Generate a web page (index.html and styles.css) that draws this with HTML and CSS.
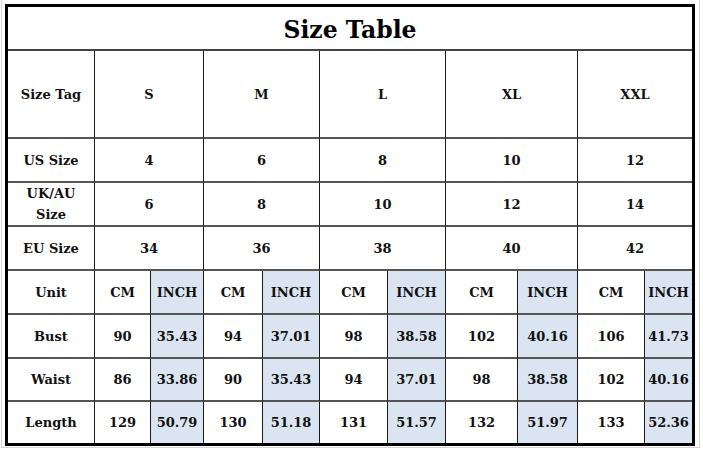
FILE: index.html
```html
<!DOCTYPE html>
<html>
<head>
<meta charset="utf-8">
<link rel="stylesheet" href="styles.css">
</head>
<body>
<div class="sheet">
  <div class="size-table">
    <div class="cell title span-all">Size Table</div>

    <div class="cell head tall">Size Tag</div>
    <div class="cell tall span2">S</div>
    <div class="cell tall span2">M</div>
    <div class="cell tall span2">L</div>
    <div class="cell tall span2">XL</div>
    <div class="cell tall span2 last">XXL</div>

    <div class="cell head">US Size</div>
    <div class="cell span2">4</div>
    <div class="cell span2">6</div>
    <div class="cell span2">8</div>
    <div class="cell span2">10</div>
    <div class="cell span2 last">12</div>

    <div class="cell head two-line">UK/AU<br>Size</div>
    <div class="cell span2">6</div>
    <div class="cell span2">8</div>
    <div class="cell span2">10</div>
    <div class="cell span2">12</div>
    <div class="cell span2 last">14</div>

    <div class="cell head">EU Size</div>
    <div class="cell span2">34</div>
    <div class="cell span2">36</div>
    <div class="cell span2">38</div>
    <div class="cell span2">40</div>
    <div class="cell span2 last">42</div>

    <div class="cell head">Unit</div>
    <div class="cell">CM</div><div class="cell inch">INCH</div>
    <div class="cell">CM</div><div class="cell inch">INCH</div>
    <div class="cell">CM</div><div class="cell inch">INCH</div>
    <div class="cell">CM</div><div class="cell inch">INCH</div>
    <div class="cell">CM</div><div class="cell inch last">INCH</div>

    <div class="cell head">Bust</div>
    <div class="cell">90</div><div class="cell inch">35.43</div>
    <div class="cell">94</div><div class="cell inch">37.01</div>
    <div class="cell">98</div><div class="cell inch">38.58</div>
    <div class="cell">102</div><div class="cell inch">40.16</div>
    <div class="cell">106</div><div class="cell inch last">41.73</div>

    <div class="cell head">Waist</div>
    <div class="cell">86</div><div class="cell inch">33.86</div>
    <div class="cell">90</div><div class="cell inch">35.43</div>
    <div class="cell">94</div><div class="cell inch">37.01</div>
    <div class="cell">98</div><div class="cell inch">38.58</div>
    <div class="cell">102</div><div class="cell inch last">40.16</div>

    <div class="cell head bottom">Length</div>
    <div class="cell bottom">129</div><div class="cell inch bottom">50.79</div>
    <div class="cell bottom">130</div><div class="cell inch bottom">51.18</div>
    <div class="cell bottom">131</div><div class="cell inch bottom">51.57</div>
    <div class="cell bottom">132</div><div class="cell inch bottom">51.97</div>
    <div class="cell bottom">133</div><div class="cell inch bottom last">52.36</div>
  </div>
</div>
</body>
</html>
```
FILE: styles.css
```css
* { box-sizing: border-box; }
html, body {
  margin: 0;
  padding: 0;
  background: #ffffff;
}
body {
  width: 703px;
  height: 450px;
  overflow: hidden;
  font-family: "DejaVu Serif", "Liberation Serif", serif;
}
.sheet {
  margin-left: 1px;
  width: 699px;
  height: 448px;
  padding: 4px 0 0 3px;
  border-left: 1px solid #d4d4d4;
  border-right: 1px solid #d4d4d4;
  border-bottom: 1px solid #d4d4d4;
}
.size-table {
  width: 690px;
  border: 3px solid #000;
  display: grid;
  grid-template-columns: 87px 56px 53px 59px 57px 68px 58px 72px 60px 67px 47px;
  grid-template-rows: 44px 88px 44px 44px 44px 44px 44px 43px 41px;
  background: #fff;
}
.cell {
  display: flex;
  align-items: center;
  justify-content: center;
  text-align: center;
  font-weight: bold;
  font-size: 13px;
  color: #111;
  border-right: 1px solid #1a1a1a;
  border-bottom: 2px solid #555;
  line-height: 1;
}
.cell.last { border-right: none; }
.cell.bottom { border-bottom: none; }
.span2 { grid-column: span 2; }
.span-all {
  grid-column: 1 / -1;
  border-right: none;
}
.title {
  font-size: 23.5px;
  padding-top: 6px;
  border-bottom: 2px solid #444;
  color: #000;
}
.two-line {
  line-height: 21px;
}
.inch { background: #dbe5f1; }
```
